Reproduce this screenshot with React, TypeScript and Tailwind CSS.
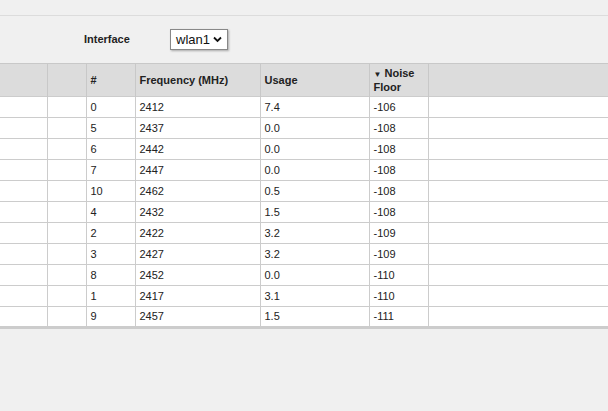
export default function App() {
  const rows = [
    [0, 2412, "7.4", -106],
    [5, 2437, "0.0", -108],
    [6, 2442, "0.0", -108],
    [7, 2447, "0.0", -108],
    [10, 2462, "0.5", -108],
    [4, 2432, "1.5", -108],
    [2, 2422, "3.2", -109],
    [3, 2427, "3.2", -109],
    [8, 2452, "0.0", -110],
    [1, 2417, "3.1", -110],
    [9, 2457, "1.5", -111],
  ];
  const widths = [47, 39, 49, 125, 109, 59, 180];
  return (
    <div className="w-[608px] h-[411px] bg-[#f0f0f0] text-[11px] text-[#222]" style={{ fontFamily: '"Liberation Sans", Arial, sans-serif' }}>
      <div className="h-[16px] border-b border-[#dcdcdc]" />
      <div className="h-[47px] flex items-center">
        <span className="ml-[84px] w-[86px] font-bold">Interface</span>
        <div className="h-[21px] px-[5px] flex items-center gap-[3px] bg-white border border-[#888] shadow-[1px_1px_2px_rgba(0,0,0,0.3)] text-[13px] text-[#111]">
          wlan1
          <svg width="9" height="7" viewBox="0 0 9 7"><path d="M1 1.5 L4.5 5 L8 1.5" fill="none" stroke="#111" strokeWidth="1.8" /></svg>
        </div>
      </div>
      <table className="border-collapse w-[608px] table-fixed border-b-[3px] border-b-[#ccc]">
        <colgroup>{widths.map((w, i) => <col key={i} style={{ width: w }} />)}</colgroup>
        <thead>
          <tr className="h-[33px] bg-[#dcdcdc] border-t border-[#c8c8c8]">
            <th className="border-r border-[#c8c8c8]" />
            <th className="border-r border-[#c8c8c8]" />
            <th className="border-r border-[#c8c8c8] text-left font-bold px-[4px]">#</th>
            <th className="border-r border-[#c8c8c8] text-left font-bold px-[4px]">Frequency (MHz)</th>
            <th className="border-r border-[#c8c8c8] text-left font-bold px-[4px]">Usage</th>
            <th className="border-r border-[#c8c8c8] text-left font-bold px-[4px] leading-[12px]"><span className="text-[8px]">▼</span> Noise<br />Floor</th>
            <th />
          </tr>
        </thead>
        <tbody>
          {rows.map((r, i) => (
            <tr key={i} className="h-[21px] bg-white border-t border-[#ccc]">
              <td className="border-r border-[#ccc]" />
              <td className="border-r border-[#ccc]" />
              <td className="border-r border-[#ccc] px-[4px]">{r[0]}</td>
              <td className="border-r border-[#ccc] px-[4px]">{r[1]}</td>
              <td className="border-r border-[#ccc] px-[4px]">{r[2]}</td>
              <td className="border-r border-[#ccc] px-[4px]">{r[3]}</td>
              <td />
            </tr>
          ))}
        </tbody>
      </table>
    </div>
  );
}
